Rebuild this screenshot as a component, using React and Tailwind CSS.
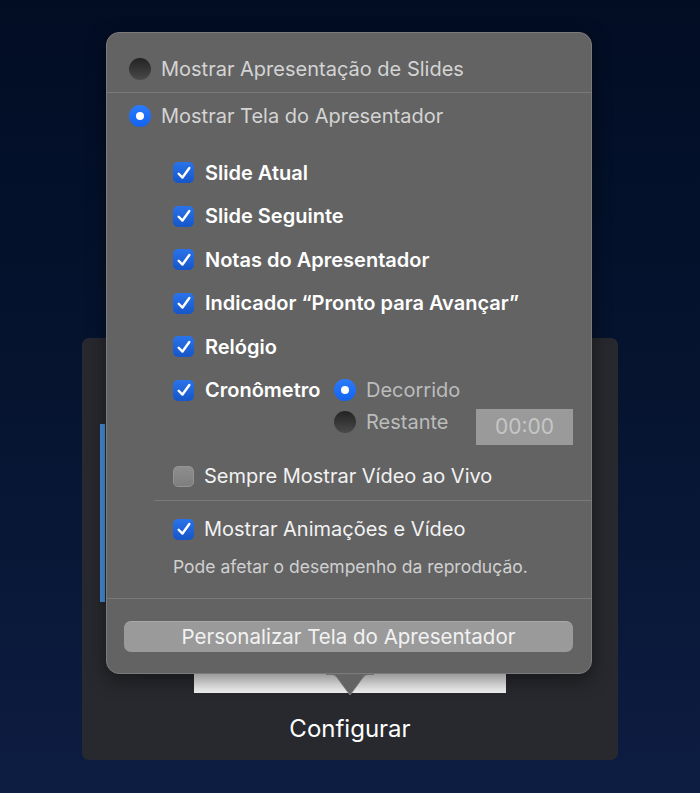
import React from 'react';

const font = { fontFamily: 'Inter, "Noto Sans", sans-serif' };

const Check = () => (
  <svg viewBox="0 0 21 21" className="w-[16px] h-[16px]">
    <path d="M3.5 11.5 L8.5 16.5 L17.5 4" fill="none" stroke="white" strokeWidth="3.2" strokeLinecap="round" strokeLinejoin="round" />
  </svg>
);

const Checkbox = ({ checked }) =>
  checked ? (
    <div className="w-[21px] h-[21px] rounded-[5px] bg-gradient-to-b from-[#2a73ea] to-[#1556c9] flex items-center justify-center shrink-0">
      <Check />
    </div>
  ) : (
    <div className="w-[21px] h-[21px] rounded-[5px] bg-gradient-to-b from-[#8e8e8e] to-[#7e7e7e] border border-[#949494] shrink-0" />
  );

const Radio = ({ on }) =>
  on ? (
    <div className="w-[22px] h-[22px] rounded-full bg-gradient-to-b from-[#2b7bff] to-[#1262ee] flex items-center justify-center shrink-0">
      <div className="w-[8px] h-[8px] rounded-full bg-white" />
    </div>
  ) : (
    <div className="w-[22px] h-[22px] rounded-full bg-gradient-to-b from-[#232323] to-[#4a4a4a] shrink-0" />
  );

const CheckRow = ({ label }) => (
  <div className="h-[43.5px] flex items-center gap-[11px]">
    <Checkbox checked />
    <span className="text-[20px] font-semibold text-white">{label}</span>
  </div>
);

export default function App() {
  return (
    <div style={font} className="relative w-[700px] h-[793px] overflow-hidden bg-gradient-to-b from-[#020d24] via-[#061430] to-[#0d1d42]">
      {/* back panel */}
      <div className="ml-[82px] pt-[338px]">
        <div className="w-[536px] h-[422px] rounded-[7px] bg-[#28292e] flex flex-col">
          <div className="ml-[18px] mt-[86px] w-[5px] h-[178px] bg-[#4590dc]" />
          <div className="ml-[112px] mt-[70px] w-[312px] h-[21px] bg-gradient-to-b from-[#e6e6e6] to-[#f4f4f4]" />
          <div className="mt-[24px] text-center text-[24px] text-white leading-none">Configurar</div>
        </div>
      </div>

      {/* popover */}
      <div className="absolute left-[106px] top-[32px] w-[486px]">
        <div className="rounded-[13px] bg-[#636363] border border-[#7b7b7b] shadow-[0_6px_20px_rgba(0,0,0,0.45)] flex flex-col">
          <div className="h-[59px] pt-[12px] pl-[22px] flex items-center gap-[10px]">
            <Radio />
            <span className="text-[20px] text-[#d4d4d4]">Mostrar Apresentação de Slides</span>
          </div>
          <div className="h-px bg-[#7a7a7a]" />

          <div className="h-[46px] pl-[22px] flex items-center gap-[10px]">
            <Radio on />
            <span className="text-[20px] text-[#d4d4d4]">Mostrar Tela do Apresentador</span>
          </div>

          <div className="mt-[12px] pl-[66px] flex flex-col">
            <CheckRow label="Slide Atual" />
            <CheckRow label="Slide Seguinte" />
            <CheckRow label="Notas do Apresentador" />
            <CheckRow label="Indicador “Pronto para Avançar”" />
            <CheckRow label="Relógio" />
            <div className="flex items-start">
              <div className="w-[161px]">
                <CheckRow label="Cronômetro" />
              </div>
              <div className="flex flex-col">
                <div className="h-[43.5px] flex items-center gap-[10px]">
                  <Radio on />
                  <span className="text-[20px] text-[#bcbcbc]">Decorrido</span>
                </div>
                <div className="-mt-[3px] flex items-start">
                  <div className="w-[142px] h-[26px] flex items-center gap-[10px]">
                    <Radio />
                    <span className="text-[20px] text-[#bcbcbc]">Restante</span>
                  </div>
                  <div className="w-[97px] h-[36px] bg-[#9a9a9a] flex items-center justify-center text-[21px] text-[#c6c6c6]">
                    00:00
                  </div>
                </div>
              </div>
            </div>
            <div className="mt-[10px] h-[42px] flex items-center gap-[10px]">
              <Checkbox />
              <span className="text-[20px] text-[#f2f2f2]">Sempre Mostrar Vídeo ao Vivo</span>
            </div>
          </div>

          <div className="mt-[3px] ml-[47px] h-px bg-[#7a7a7a]" />

          <div className="pl-[66px] h-[56px] flex items-center gap-[10px]">
            <Checkbox checked />
            <span className="text-[20px] text-[#f2f2f2]">Mostrar Animações e Vídeo</span>
          </div>
          <div className="pl-[66px] h-[20px] flex items-center text-[17.5px] text-[#d0d0d0]">
            Pode afetar o desempenho da reprodução.
          </div>

          <div className="mt-[21px] h-px bg-[#7a7a7a]" />

          <div className="mt-[22px] mb-[21px] ml-[17px] mr-[18px] h-[31px] rounded-[7px] bg-[#9a9a9a] border-t border-[#a8a8a8] flex items-center justify-center text-[20.5px] text-[#f2f2f2]">
            Personalizar Tela do Apresentador
          </div>
        </div>
        <svg width="48" height="24" viewBox="0 0 48 24" className="absolute left-[220px] top-[642px]">
          <path d="M0 0 C7 0 9 1 11 3.5 L24 21 L37 3.5 C39 1 41 0 48 0 Z" fill="#636363" stroke="#7b7b7b" strokeWidth="1" />
          <rect x="0" y="-1" width="48" height="1.6" fill="#636363" />
        </svg>
      </div>
    </div>
  );
}
